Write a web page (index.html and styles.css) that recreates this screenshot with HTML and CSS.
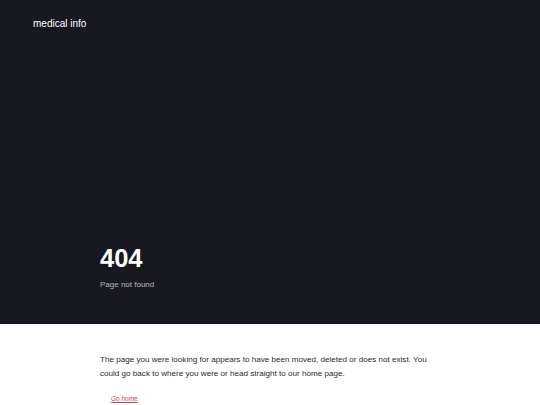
FILE: index.html
```html
<!DOCTYPE html>
<html>
<head>
<meta charset="utf-8">
<link rel="stylesheet" href="styles.css">
</head>
<body>
<header class="hero">
  <div class="brand">medical info</div>
  <div class="title-block">
    <h1 class="code">404</h1>
    <p class="subtitle">Page not found</p>
  </div>
</header>
<main class="content">
  <p class="message">The page you were looking for appears to have been moved, deleted or does not exist. You could go back to where you were or head straight to our home page.</p>
  <a class="home-link" href="#">Go home</a>
</main>
</body>
</html>
```
FILE: styles.css
```css
* { box-sizing: border-box; }
html, body { margin: 0; padding: 0; }
body {
  font-family: "Liberation Sans", Arial, sans-serif;
  background: #ffffff;
  width: 540px;
  height: 405px;
  overflow: hidden;
}
.hero {
  background: #181820;
  height: 324px;
  display: flex;
  flex-direction: column;
  justify-content: space-between;
  padding: 17px 0 0 33px;
}
.brand {
  color: #ffffff;
  font-size: 10px;
  line-height: 13px;
}
.title-block {
  padding: 0 0 34px 67px;
}
.code {
  margin: 0;
  color: #ffffff;
  font-size: 25.5px;
  line-height: 28px;
  font-weight: bold;
}
.subtitle {
  margin: 8px 0 0;
  color: #b8b8c0;
  font-size: 8px;
  line-height: 10px;
}
.content {
  padding: 29px 0 0 100px;
}
.message {
  margin: 0;
  width: 345px;
  color: #2a2a2a;
  font-size: 8.1px;
  line-height: 14px;
}
.home-link {
  display: inline-block;
  margin: 14px 0 0 11px;
  color: #d0404a;
  font-size: 6.5px;
  font-style: italic;
  text-decoration: underline;
}
```
